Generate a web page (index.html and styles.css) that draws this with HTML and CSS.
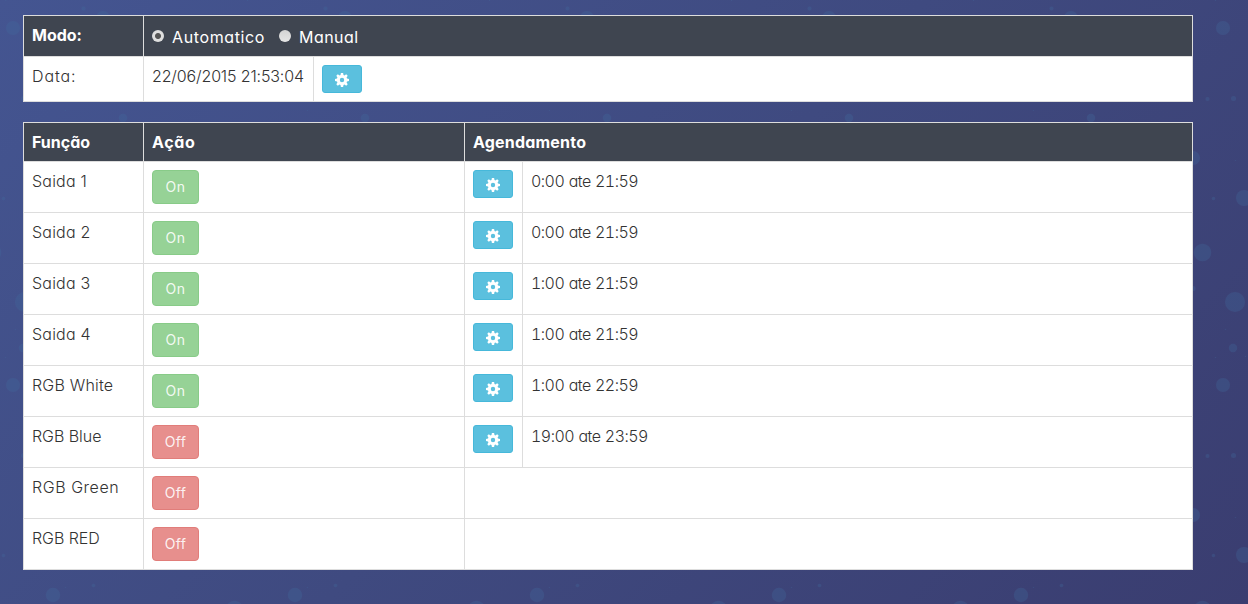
FILE: index.html
```html
<!DOCTYPE html>
<html lang="pt">
<head>
<meta charset="utf-8">
<title>Painel</title>
<link rel="stylesheet" href="styles.css">
</head>
<body>
<svg class="bubbles" aria-hidden="true">
  <defs>
    <pattern id="tile" width="242" height="357" patternUnits="userSpaceOnUse">
      <circle cx="13" cy="28" r="7"/><circle cx="103" cy="18" r="7"/>
      <circle cx="83.500" cy="8.500" r="2"/><circle cx="239.500" cy="99" r="2"/>
      <circle cx="23.500" cy="98.500" r="2.500"/><circle cx="225" cy="158" r="7"/>
      <circle cx="3.500" cy="198.500" r="1.700"/><circle cx="34" cy="198" r="8"/>
      <circle cx="234.500" cy="252.500" r="8.700"/><circle cx="-7.500" cy="252.500" r="8.700"/>
      <circle cx="225" cy="288.500" r="2.500"/><circle cx="25" cy="302" r="10"/>
      <circle cx="23" cy="348" r="4.200"/><circle cx="123" cy="118" r="4.200"/>
      <circle cx="53" cy="238" r="7.200"/><circle cx="93.500" cy="228.500" r="1.800"/>
      <circle cx="25.500" cy="160.500" r=".6"/><circle cx="15.500" cy="329.500" r=".6"/>
      <circle cx="5.500" cy="0.500" r=".6"/><circle cx="35.500" cy="356.300" r=".6"/>
      <circle cx="65.500" cy="110.500" r=".6"/><circle cx="65.500" cy="230.500" r=".6"/>
    </pattern>
    <symbol id="cog" viewBox="0 0 14 14">
      <path fill-rule="evenodd" d="M5.900 0h2.200l.4 2 .9.400L11.200 1.300l1.500 1.500-1.100 1.800.4.900 2 .4v2.200l-2 .4-.4.900 1.100 1.800-1.500 1.500-1.800-1.100-.9.400-.4 2H5.900l-.4-2-.9-.4-1.800 1.100-1.500-1.500 1.100-1.800-.4-.9-2-.4V5.900l2-.4.400-.9L1.300 2.800l1.500-1.500 1.800 1.100.9-.4zM7 4.800a2.200 2.200 0 1 0 0 4.400 2.200 2.200 0 0 0 0-4.400z"/>
    </symbol>
  </defs>
  <rect width="100%" height="100%" fill="url(#tile)"/>
</svg>
<main class="page">
  <table class="grid mode">
    <colgroup><col class="c-name"><col class="c-date"><col></colgroup>
    <tr class="dark"><th>Modo:</th><td class="options" colspan="2"><div class="choices"><label><i class="radio checked"></i><span class="auto">Automatico</span></label><label><i class="radio"></i><span class="manual">Manual</span></label></div></td></tr>
    <tr><td class="data">Data:</td><td class="date">22/06/2015 21:53:04</td><td><button class="btn info"><svg><use href="#cog"/></svg></button></td></tr>
  </table>
  <table class="grid outputs">
    <colgroup><col class="c-name"><col class="c-action"><col class="c-cog"><col></colgroup>
    <tr class="dark"><th>Função</th><th class="action">Ação</th><th class="schedule" colspan="2">Agendamento</th></tr>
    <tr><td class="name">Saida 1</td><td><button class="btn on">On</button></td><td><button class="btn info"><svg><use href="#cog"/></svg></button></td><td class="time">0:00 ate 21:59</td></tr>
    <tr><td class="name">Saida 2</td><td><button class="btn on">On</button></td><td><button class="btn info"><svg><use href="#cog"/></svg></button></td><td class="time">0:00 ate 21:59</td></tr>
    <tr><td class="name">Saida 3</td><td><button class="btn on">On</button></td><td><button class="btn info"><svg><use href="#cog"/></svg></button></td><td class="time">1:00 ate 21:59</td></tr>
    <tr><td class="name">Saida 4</td><td><button class="btn on">On</button></td><td><button class="btn info"><svg><use href="#cog"/></svg></button></td><td class="time">1:00 ate 21:59</td></tr>
    <tr><td class="name">RGB White</td><td><button class="btn on">On</button></td><td><button class="btn info"><svg><use href="#cog"/></svg></button></td><td class="time">1:00 ate 22:59</td></tr>
    <tr><td class="name tight">RGB Blue</td><td><button class="btn off">Off</button></td><td><button class="btn info"><svg><use href="#cog"/></svg></button></td><td class="time">19:00 ate 23:59</td></tr>
    <tr><td class="name wide">RGB Green</td><td><button class="btn off">Off</button></td><td colspan="2"></td></tr>
    <tr><td class="name tight">RGB RED</td><td><button class="btn off">Off</button></td><td colspan="2"></td></tr>
  </table>
</main>
</body>
</html>
```
FILE: styles.css
```css
* { box-sizing: border-box; }
html { height: 100%; }
body {
  margin: 0;
  height: 604px;
  overflow: hidden;
  background: linear-gradient(135deg, #445591 0%, #3f4a80 50%, #3a3d70 100%);
  font: 300 16px/22px Inter, "Century Gothic", sans-serif;
  font-feature-settings: "cv11";
  color: #333;
}
.bubbles { position: absolute; inset: 0; width: 100%; height: 100%; fill: #3f699d; fill-opacity: .55; }
.page { position: relative; padding: 15px 55px 0 23px; }
.grid {
  width: 1170px;
  table-layout: fixed;
  border-collapse: collapse;
  background: #fff;
  margin-bottom: 20px;
}
.grid th, .grid td { border: 1px solid #ddd; padding: 8px; text-align: left; vertical-align: top; white-space: nowrap; }
.c-name { width: 120px; }
.c-date { width: 170px; }
.c-action { width: 321px; }
.c-cog { width: 58px; }
.dark { background: #3f4550; color: #fff; height: 39px; }
.dark th { font-weight: 700; }
.dark .action { letter-spacing: .6px; }
.dark .schedule { letter-spacing: .2px; }
.mode .dark { height: 41px; }
.mode tr + tr { height: 45px; }
.outputs tr + tr { height: 51px; }
.grid .options { padding: 10px 8px 6px; font-weight: 400; }
.choices { display: flex; height: 22px; }
.options label { display: flex; align-items: center; margin-right: 14px; }
.auto { letter-spacing: .62px; }
.manual { letter-spacing: .45px; }
.data { letter-spacing: .9px; }
.date { letter-spacing: -.14px; }
.name { letter-spacing: .2px; }
.name.wide { letter-spacing: .55px; }
.name.tight { letter-spacing: -.05px; }
.time { font-feature-settings: "cv11", "tnum"; letter-spacing: -.52px; word-spacing: .6px; }
.radio {
  width: 12px;
  height: 12px;
  margin: -3px 8px 0 0;
  border-radius: 50%;
  background: linear-gradient(#d4d4d4, #e6e6e6);
}
.radio.checked { background: radial-gradient(circle, #555 0 2.500px, #dedede 3.500px); }
.btn {
  display: block;
  border: 1px solid;
  border-radius: 4px;
  padding: 0;
  width: 47px;
  height: 34px;
  font: 400 14px/32px Inter, sans-serif;
  color: rgba(255, 255, 255, .9);
}
.on { background: #96d296; border-color: #88cb88; letter-spacing: .6px; }
.off { background: #e78f8d; border-color: #e17d7a; letter-spacing: .3px; }
.info { width: 40px; height: 28px; border-radius: 3px; background: #5bc0de; border-color: #46b8da; }
.info svg { display: block; width: 14px; height: 14px; margin: 2px auto 0; fill: #fff; }
```
